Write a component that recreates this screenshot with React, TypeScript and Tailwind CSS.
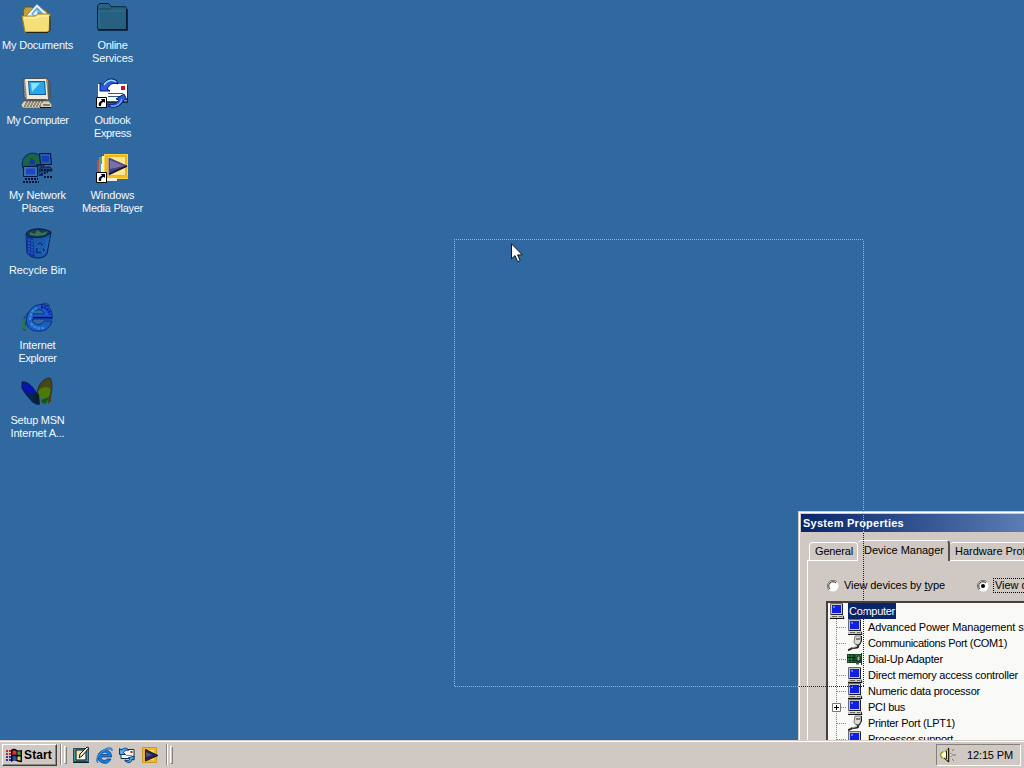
import React, { useLayoutEffect, useRef, useState } from "react";

/* Text whose tracking is adjusted so that it fills a known width; `u` is the index of an underlined access key. */
function Fit({ w, children, className = "", u = -1 }: { w: number; children: string; className?: string; u?: number }) {
  const ref = useRef<HTMLSpanElement>(null);
  const [ls, setLs] = useState(0);
  useLayoutEffect(() => {
    const el = ref.current;
    if (el) setLs((w - el.getBoundingClientRect().width) / children.length);
  }, [w, children]);
  return (
    <span ref={ref} className={"inline-block whitespace-pre " + className} style={{ letterSpacing: `${ls}px` }}>
      {u < 0 ? children : (
        <>
          {children.slice(0, u)}
          <u className="underline-offset-1">{children[u]}</u>
          {children.slice(u + 1)}
        </>
      )}
    </span>
  );
}

const Svg = ({ children, s = 32 }: { children: React.ReactNode; s?: number }) => (
  <svg width={s} height={s} viewBox={`0 0 ${s} ${s}`} className="block shrink-0">
    {children}
  </svg>
);

const Documents = () => (
  <Svg>
    <path d="M2 9l2-4h7l3 3h11l2 3v18H4z" fill="#c8a030" stroke="#685818" />
    <path d="M5 14L16 2l14 13-5 8H8z" fill="#f4fbff" stroke="#6688a8" />
    <path d="M10 12l6-7 9 9-5 5z" fill="#62a5dc" />
    <path d="M12 12l4-4 3 4 3 1-4 4z" fill="#e0f5ff" />
    <path d="M16 9l5 5-3 1z" fill="#2865b0" />
    <path d="M1 14h13l3-2h12l-1 17-2 1H4z" fill="#f7df78" stroke="#a18427" />
    <path d="M3 16h12l3-2h9" stroke="#fff9c2" fill="none" />
    <path d="M5 30.5h22l2-2V14" stroke="#242414" fill="none" />
  </Svg>
);

const Folder = () => (
  <Svg>
    <path d="M1.500 27V4l2-2.500h9l3 3h14l1 2v20l-1 1h-27z" fill="#286080" stroke="#08243c" />
    <path d="M2 7h12l2-2h13" stroke="#174760" fill="none" />
    <path d="M3 26V9h26M4 6V4l2-2" stroke="#347087" fill="none" />
    <path d="M2 28h29V7" stroke="#04162c" fill="none" strokeWidth="1.500" />
  </Svg>
);

const Computer = () => (
  <Svg>
    <path d="M2 2h4l20-1 3 5v16l-3 2H6l-3-4z" fill="#8f8b7f" stroke="#3f3f3c" strokeWidth=".8" />
    <path d="M4 2h21l2 20H6z" fill="#eeeada" />
    <path d="M7 4h17l1 14H8z" fill="#155893" />
    <path d="M8 5h15l1 12H9z" fill="#29a6ec" />
    <path d="M10 6h9l-8 9z" fill="#8be6ff" />
    <path d="M27 4l2 3v14l-2 2z" fill="#5d5b54" />
    <path d="M7 22h18l2 3H5z" fill="#55544f" />
    <path d="M3 24h25l3 4-1 3H2l-2-3z" fill="#d8d2bf" stroke="#605c52" strokeWidth=".7" />
    <path d="M4 27h16M3 29h17M5 25h18" stroke="#3d3b36" strokeDasharray="2 1" />
    <path d="M22 28h7" stroke="#28261f" />
    <path d="M19 30.500h11" stroke="#14130f" />
  </Svg>
);

const Shortcut = () => (
  <g>
    <path d="M.5 20.500h10v10H.5z" fill="#fff" stroke="#000" />
    <path d="M3 29c-1-3 1-5 3-5l-1-2h4v4l-1-1c-2 0-3 1-3 4z" fill="#000" />
  </g>
);

const Outlook = () => (
  <Svg>
    <path d="M2 7h29v18H2z" fill="#fff" />
    <path d="M2 25h30V8" stroke="#101a28" fill="none" strokeWidth="1.500" />
    <path d="M25 9h4v4h-4z" fill="#b71920" />
    <path d="M12 16.500h15M12 19.500h13" stroke="#276369" />
    <path d="M4 12v-6l3 2c3-6 9-8 14-4l1 3c-5-2-8 0-11 5l3 2H4z" fill="#2860dc" stroke="#061b70" />
    <path d="M8 8c3-5 8-6 12-3" stroke="#9cd4ff" fill="none" strokeWidth="1.500" />
    <path d="M12 29c7 3 13 0 16-6h3l-3-6-8 5 3 1c-3 4-6 5-11 4z" fill="#2860dc" stroke="#061b70" />
    <path d="M15 29c6 1 9-2 11-7" stroke="#9cd4ff" fill="none" />
    <Shortcut />
  </Svg>
);

const Network = () => (
  <Svg>
    <circle cx="12" cy="12" r="11" fill="#1c4e80" stroke="#0a2450" strokeWidth=".8" />
    <path d="M2 9l7-7 6 1-3 5-4 1-3 7zM14 3l6 5-1 6-5-1-2-4zM2 17l5 1-1 4z" fill="#176a35" />
    <path d="M10 6l4 3-1 4-4-2z" fill="#1a2fb0" />
    <path d="M18.500 1.500h11l1 11h-11z" fill="#2b5ca0" stroke="#071238" />
    <path d="M21 4h7v6h-7z" fill="#123fb4" />
    <path d="M20 15h9l2 2v2H18z" fill="#1e4680" stroke="#071238" strokeWidth=".7" />
    <path d="M2.500 14.500h14v10h-14z" fill="#4272a4" stroke="#061747" />
    <path d="M5 16.500h9v6H5z" fill="#1c46c4" />
    <path d="M2 30h16M4 27h13M20 18h10M20 22l7-2M23 25h8" stroke="#071338" strokeWidth="2" strokeDasharray="2 1" />
    <path d="M15 12h6v2h-6zM18 22h4v2h-4z" fill="#0b2450" />
  </Svg>
);

const Recycle = () => (
  <Svg>
    <path d="M5 7l1 19c4 6 16 7 20 1l4-22z" fill="#1a58a8" stroke="#061c64" />
    <path d="M5 7l1 19c2 3 5 4 8 4L12 10z" fill="#1238a0" />
    <path d="M5 7C7 1 22 0 30 5c-4 7-22 7-25 2z" fill="#163e45" stroke="#081849" />
    <path d="M9 5l5 2 2-4 5 3 6-2-3 4-8 1-7-1z" fill="#397060" />
    <path d="M8 12v14M11 13v15M26 12l-3 15M28 11l-3 13" stroke="#2875c9" strokeDasharray="2 1" />
    <path d="M15 18l4-4 4 4-2 2-2-3-2 2zM14 21l4-1-1 4h4v3h-7zM22 20l3 3-3 3-1-4z" fill="#11358d" stroke="#2e86bd" strokeWidth=".5" />
  </Svg>
);

const Explorer = () => (
  <Svg>
    <path d="M3 28C-3 19 9 4 25 1l4 3c-5-2-9 0-14 3C7 14 2 22 5 28z" fill="#276883" stroke="#0b2c63" strokeWidth=".7" />
    <path d="M31 17H11c1 7 10 7 12 2h8c-2 8-9 11-16 10C7 28 4 22 6 14 9 5 17 1 24 3c6 2 8 8 7 14zM12 12h11c0-6-10-6-11 0z" fill="#1b5fc4" stroke="#061e89" strokeWidth=".8" fillRule="evenodd" />
    <path d="M9 18C9 12 12 8 16 6M10 21c3 5 9 7 14 4" stroke="#2d8fd2" fill="none" strokeWidth="2.500" strokeDasharray="3 1" />
    <path d="M20 5c5 0 8 3 9 8" stroke="#0a20b0" fill="none" strokeWidth="3" strokeDasharray="2 1" />
    <path d="M1 17c-2 6 0 10 4 11l2-2c-3 0-4-4-3-9" fill="#2a7658" />
    <path d="M12 15.500h19" stroke="#020b72" strokeWidth="1.500" />
  </Svg>
);

const Msn = () => (
  <Svg>
    <path d="M1 5c6-1 11 5 15 12l1 10C10 25 5 18 1 11z" fill="#0716a8" stroke="#06164d" />
    <path d="M6 17l10-1 2 12c-5 0-9-4-12-11z" fill="#052548" />
    <path d="M16 17C17 8 22 1 29 1c3 5 2 10 1 16z" fill="#4c4518" stroke="#252e28" />
    <path d="M28 9h3l-1 15-3 3z" fill="#453f18" />
    <path d="M17 14c3-4 8-5 12-3 1 6-1 10-5 11-4 0-6-3-7-8z" fill="#4d7908" />
    <path d="M14 15l4 3 1 10-4-3z" fill="#121c24" />
    <path d="M20 23l8-3-3 7-4-1z" fill="#155a10" />
  </Svg>
);

const Player = () => (
  <Svg>
    <path d="M1 8h4v13H1z" fill="#c24c39" />
    <path d="M3 5h6v4H3z" fill="#58a953" />
    <path d="M3 9h5v12H3z" fill="#4a99ce" />
    <path d="M5 12h5v12H5z" fill="#fff" />
    <path d="M6 4h5v20H6z" fill="#f0eee0" />
    <path d="M8 2h24v25H8z" fill="#eeb61e" />
    <path d="M12 5h17v18H12z" fill="#ffe792" />
    <path d="M8.500 2.500h23v24h-23z" fill="none" stroke="#ffd33b" />
    <path d="M13 6l18 8-18 9z" fill="#473d78" stroke="#55508a" />
    <path d="M14 8l14 6-14 3z" fill="#7773a8" />
    <path d="M13 22l18-8" stroke="#17152e" strokeWidth="1.500" />
    <path d="M11 26h10v3H11z" fill="#f8eee0" />
    <path d="M8 24h24v2H8z" fill="#f5bc1c" />
    <Shortcut />
  </Svg>
);

const MiniPc = () => (
  <Svg s={16}>
    <path d="M1.500.5h12v11h-12z" fill="#c9c7c0" stroke="#6c6a64" />
    <path d="M3 2h9v8H3z" fill="#1020e0" />
    <path d="M4 3h2v2H4z" fill="#5a78ff" />
    <path d="M13.500 1v11M2 11.500h12" stroke="#222" />
    <path d="M1 12.500h12l2 3H1z" fill="#c7c4bb" />
    <path d="M3 13.500h5M10 13.500h3" stroke="#68665e" />
    <path d="M1 15.500h14l-1-3" stroke="#111" fill="none" />
  </Svg>
);

const Plug = () => (
  <Svg s={16}>
    <path d="M8 1h6v5l-2 4H9L7 7z" fill="#dedbd4" stroke="#77756f" />
    <path d="M14.500 1v5l-2 4H9M9 4h4" stroke="#222" fill="none" />
    <path d="M11 10c1 3-2 3-5 3-2 0-2 2-5 2" stroke="#282826" fill="none" strokeWidth="2" />
    <path d="M10 10c0 2-3 2-5 3" stroke="#c3c1b9" fill="none" />
  </Svg>
);

const Card = () => (
  <Svg s={16}>
    <path d="M0 3h15v9H0z" fill="#174c29" />
    <path d="M1 4h6v2H1zM1 7h5v2H1zM1 10h6v1H1zM9 4h5v4H9z" fill="#328b43" />
    <path d="M3 3v9M6 3v9M0 6.500h8" stroke="#05180c" />
    <path d="M10 5h3v5h-3z" fill="#a0bd9b" stroke="#102914" />
    <path d="M14.500 2v12" stroke="#262e28" />
    <path d="M9 12.500h3" stroke="#555" strokeWidth="2" />
  </Svg>
);

const Flag = () => (
  <Svg s={16}>
    <path d="M5 3c3-2 4-1 6 0 2 1 3 0 5 0v12c-3 1-4-1-6-1-2-1-3 0-5 1z" fill="#08080c" />
    <path d="M6.500 4c2-1 3 0 4 0v4c-2-1-3 0-4 0z" fill="#e33432" />
    <path d="M11.500 4.500c1 0 2 0 3-.3v4c-1 0-2 0-3-.4z" fill="#32a84a" />
    <path d="M6.500 9.500c2-1 3 0 4 0v4c-2-1-3 0-4 0z" fill="#2947cf" />
    <path d="M11.500 9.500h3v4l-3-.5z" fill="#efd33d" />
    <path d="M0 4h2M3 4h2M0 7h2M3 7h2" stroke="#cc262a" strokeWidth="2" />
    <path d="M0 10h2M3 10h2M0 13h2M3 13h2" stroke="#2539a0" strokeWidth="2" />
  </Svg>
);

const QDesktop = () => (
  <Svg s={18}>
    <path d="M1.500 2.500h15v13h-15z" fill="#4a93ac" stroke="#1d4a5c" />
    <path d="M4 4h10v10H4z" fill="#eee4a7" stroke="#12191c" />
    <path d="M5 11c3-4 5 0 8-3v5H5z" fill="#fffce5" />
    <path d="M7 12l1-4 7-7 2 1-7 8z" fill="#f6f1df" stroke="#151515" />
    <path d="M1 16.500h16" stroke="#101d28" />
  </Svg>
);
const QIe = () => (
  <Svg s={18}>
    <path d="M16.500 11H6c0 4 5 4 6 2h4c-2 4-5 5-8 4-4-1-6-4-5-8 1-3 4-5 7-5 4 0 7 3 6.500 7zM6.500 8.500h6c0-3-5-3-6 0z" fill="#187bd6" stroke="#073a8c" strokeWidth=".7" fillRule="evenodd" />
    <path d="M3 17C-1 14 4 5 12 2c4-1 6 0 5 3-1-3-5-2-9 1-4 3-7 9-5 11z" fill="#3fa8e8" stroke="#0845a0" strokeWidth=".5" />
  </Svg>
);
const QMail = () => (
  <Svg s={18}>
    <path d="M3 3.500h13v9H3z" fill="#f8f8f3" stroke="#19303d" />
    <path d="M12.500 5h2v2h-2z" fill="#b62121" />
    <path d="M8 9.500h6" stroke="#718998" />
    <path d="M1.500 2.500v6h6l-2-2c1-2 3-3 5-2-1-3-5-3-7-.5z" fill="#58aeea" stroke="#07397b" />
    <path d="M7 15c4 3 7 1 7-2l2 1v-4l-6 2 2 1c-1 2-2 2-5 1z" fill="#58aeea" stroke="#07397b" />
  </Svg>
);
const QPlayer = () => (
  <Svg s={18}>
    <path d="M1.500 1.500h14v15h-14z" fill="#f2b828" stroke="#c99a28" />
    <path d="M4 4h9v10H4z" fill="#f9da71" />
    <path d="M4.500 3.500L17 9.500l-12.500 5.500z" fill="#252553" stroke="#16162f" />
    <path d="M5 6l6 3-6 2z" fill="#56558b" />
  </Svg>
);
const Speaker = () => (
  <Svg s={16}>
    <path d="M2 5h2l5-4v14l-5-4H2L0 8z" fill="#e5e334" stroke="#77783c" />
    <path d="M4 4l2 2v4l-3 1-1-3z" fill="#fffed0" />
    <path d="M8.500 1v14L4 11M6.500 4v8" stroke="#202010" fill="none" />
    <path d="M12 4l2-2M12 8h4M12 12l2 2M11 6v1M11 9v1" stroke="#77776f" fill="none" />
  </Svg>
);

type Line = [string, number];
type Item = { icon: React.ReactNode; lines: Line[] };

const left: Item[] = [
  { icon: <Documents />, lines: [["My Documents", 71]] },
  { icon: <Computer />, lines: [["My Computer", 62]] },
  { icon: <Network />, lines: [["My Network", 57], ["Places", 32]] },
  { icon: <Recycle />, lines: [["Recycle Bin", 57]] },
  { icon: <Explorer />, lines: [["Internet", 36], ["Explorer", 38]] },
  { icon: <Msn />, lines: [["Setup MSN", 54], ["Internet A...", 54]] },
];
const right: Item[] = [
  { icon: <Folder />, lines: [["Online", 30], ["Services", 41]] },
  { icon: <Outlook />, lines: [["Outlook", 36], ["Express", 37]] },
  { icon: <Player />, lines: [["Windows", 44], ["Media Player", 61]] },
];

const Column = ({ items }: { items: Item[] }) => (
  <div className="flex w-[75px] flex-col">
    {items.map((it, i) => (
      <div key={i} className="flex h-[75px] flex-col items-center pt-0.5 text-[#f0fbff]">
        <div className="mr-0.5">{it.icon}</div>
        <div className="flex flex-col items-center pt-[5px] leading-[13px]">
          {it.lines.map(([t, w]) => (
            <Fit key={t} w={w}>{t}</Fit>
          ))}
        </div>
      </div>
    ))}
  </div>
);

const devices: { name: string; w: number; icon: React.ReactNode; plus?: boolean }[] = [
  { name: "Advanced Power Management support", w: 186, icon: <MiniPc /> },
  { name: "Communications Port (COM1)", w: 139, icon: <Plug /> },
  { name: "Dial-Up Adapter", w: 75, icon: <Card /> },
  { name: "Direct memory access controller", w: 150, icon: <MiniPc /> },
  { name: "Numeric data processor", w: 112, icon: <MiniPc /> },
  { name: "PCI bus", w: 37, icon: <MiniPc />, plus: true },
  { name: "Printer Port (LPT1)", w: 87, icon: <Plug /> },
  { name: "Processor support", w: 85, icon: <MiniPc /> },
];

const Radio = ({ on = false }: { on?: boolean }) => (
  <Svg s={12}>
    <circle cx="6" cy="6" r="5.500" fill="#fff" />
    <path d="M2 10a5.500 5.500 0 0 1 8-8" fill="none" stroke="#77736e" />
    <path d="M3 9a4.200 4.200 0 0 1 6-6" fill="none" stroke="#222" />
    {on && <circle cx="6" cy="6" r="2" fill="#000" />}
  </Svg>
);

const Window = () => (
  <div className="h-[229px] w-[226px] shrink-0 overflow-hidden">
    <div className="h-[460px] w-[410px] border border-[#d4ccc5] bg-[#d0c8c2]">
      <div className="h-full border-l border-t border-white pl-px pt-px">
        <div className="flex h-[18px] w-[404px] items-center bg-linear-to-r from-[#0a246a] to-[#a6caf0] pl-0.5 font-bold text-white">
          <Fit w={101}>System Properties</Fit>
        </div>
        <div className="flex h-7 items-end pl-2">
          <div className="flex h-[18px] w-[49px] items-center rounded-t-sm border-l border-r border-t border-white pl-[5px]">
            <Fit w={38}>General</Fit>
          </div>
          <div className="z-10 -mb-px flex h-[21px] w-[92px] items-start rounded-t-sm border-r-2 border-t border-r-[#55514e] border-t-white bg-[#d0c8c2] pl-1.5 pt-[3px] leading-[13px]">
            <Fit w={80}>Device Manager</Fit>
          </div>
          <div className="flex h-[18px] w-[98px] items-center rounded-t-sm border-t border-white pl-[5px]">
            <Fit w={87}>Hardware Profiles</Fit>
          </div>
        </div>
        <div className="ml-1.5 h-[390px] border-l border-t border-white pl-[18px]">
          <div className="flex h-10 items-start pl-px pt-[18px]">
            <div className="flex w-[150px] items-center gap-[5px] leading-[13px]">
              <Radio />
              <Fit w={101} u={16}>View devices by type</Fit>
            </div>
            <div className="-mt-px flex items-center gap-1 leading-[13px]">
              <Radio on />
              <span className="border border-dotted border-black pl-px">
                <Fit w={134} u={16}>View devices by connection</Fit>
              </span>
            </div>
          </div>
          <div className="h-[300px] w-[360px] border-l-2 border-t-2 border-[#44403d] bg-[#f9faf8] pl-px">
            <div className="flex h-4 items-center gap-[3px]">
              <MiniPc />
              <span className="flex h-4 items-center bg-[#0a246a] px-px text-white">
                <Fit w={46}>Computer</Fit>
              </span>
            </div>
            {devices.map((d) => (
              <div key={d.name} className="flex h-4 items-center">
                <svg width="18" height="16" className="block shrink-0">
                  <path d="M7.500 0v16M8 8.500h10" stroke="#85827e" strokeDasharray="1 1" fill="none" />
                  {d.plus && <path d="M3.500 4.500h8v8h-8z" fill="#fff" stroke="#77736f" />}
                  {d.plus && <path d="M5 8.500h5M7.500 6v5" stroke="#000" />}
                </svg>
                {d.icon}
                <Fit w={d.w} className="ml-[5px]">{d.name}</Fit>
              </div>
            ))}
          </div>
        </div>
      </div>
    </div>
  </div>
);

const Grip = () => (
  <div className="flex h-[21px] items-center gap-0.5">
    <span className="h-[21px] w-0.5 border-l border-r border-l-[#8a8580] border-r-white" />
    <span className="h-[18px] w-[3px] border border-b-[#85807b] border-l-white border-r-[#85807b] border-t-white" />
  </div>
);

export default function App() {
  return (
    <div className="relative flex h-[768px] w-[1024px] flex-col overflow-hidden bg-[#3068a0] font-['Liberation_Sans',Arial,sans-serif] text-[11px] leading-[13px] text-black">
      <main className="flex h-[740px] justify-between overflow-hidden">
        <div className="flex">
          <Column items={left} />
          <Column items={right} />
        </div>
        <div className="flex items-end">
          <Window />
        </div>
      </main>

      <footer className="h-7 border-t border-[#d4ccc6] bg-[#d0c8c2]">
        <div className="flex h-[27px] items-start border-t border-white pl-0.5 pr-[3px] pt-0.5">
          <button className="flex h-[22px] w-[55px] items-center gap-0.5 border border-b-[#403d3a] border-l-white border-r-[#403d3a] border-t-white pl-[3px] font-bold shadow-[inset_-1px_-1px_#8b8681]">
            <Flag />
            <Fit w={28} className="text-[12px]">Start</Fit>
          </button>
          <div className="flex pl-[3px]">
            <Grip />
          </div>
          <div className="flex gap-[5px] pl-[5px] pt-[2px]">
            <QDesktop />
            <QIe />
            <QMail />
            <QPlayer />
          </div>
          <div className="flex pl-[7px]">
            <Grip />
          </div>
          <div className="ml-auto flex h-[22px] w-[85px] items-center border border-b-white border-l-[#85807b] border-r-white border-t-[#85807b] pl-[3px]">
            <Speaker />
            <Fit w={46} className="ml-[11px] pt-px">12:15 PM</Fit>
          </div>
        </div>
      </footer>

      {/* window drag outline: light dots over the desktop and title bar, dark dots over the window face */}
      <div className="pointer-events-none absolute left-[454px] top-[239px] z-20 flex h-[448px] w-[410px] flex-col justify-between">
        <div className="h-px bg-[repeating-linear-gradient(90deg,#b4b4ac_0_1px,transparent_1px_2px)]" />
        <div className="flex flex-1 justify-between">
          <div className="w-px bg-[repeating-linear-gradient(180deg,transparent_0_1px,#b4b4ac_1px_2px)]" />
          <div className="flex w-px flex-col">
            <div className="h-[292px] bg-[repeating-linear-gradient(180deg,transparent_0_1px,#b4b4ac_1px_2px)]" />
            <div className="flex-1 bg-[repeating-linear-gradient(180deg,transparent_0_1px,#222_1px_2px)]" />
          </div>
        </div>
        <div className="flex h-px">
          <div className="w-[344px] bg-[repeating-linear-gradient(90deg,transparent_0_1px,#b4b4ac_1px_2px)]" />
          <div className="flex-1 bg-[repeating-linear-gradient(90deg,transparent_0_1px,#222_1px_2px)]" />
        </div>
      </div>

      <svg width="12" height="20" className="pointer-events-none absolute left-[511px] top-[243px] z-30">
        <path d="M.5.8v15l3.500-3.200 2.700 6.100 2.500-1.100-2.600-5.700h4.700z" fill="#fff" stroke="#0b1424" />
      </svg>
    </div>
  );
}
